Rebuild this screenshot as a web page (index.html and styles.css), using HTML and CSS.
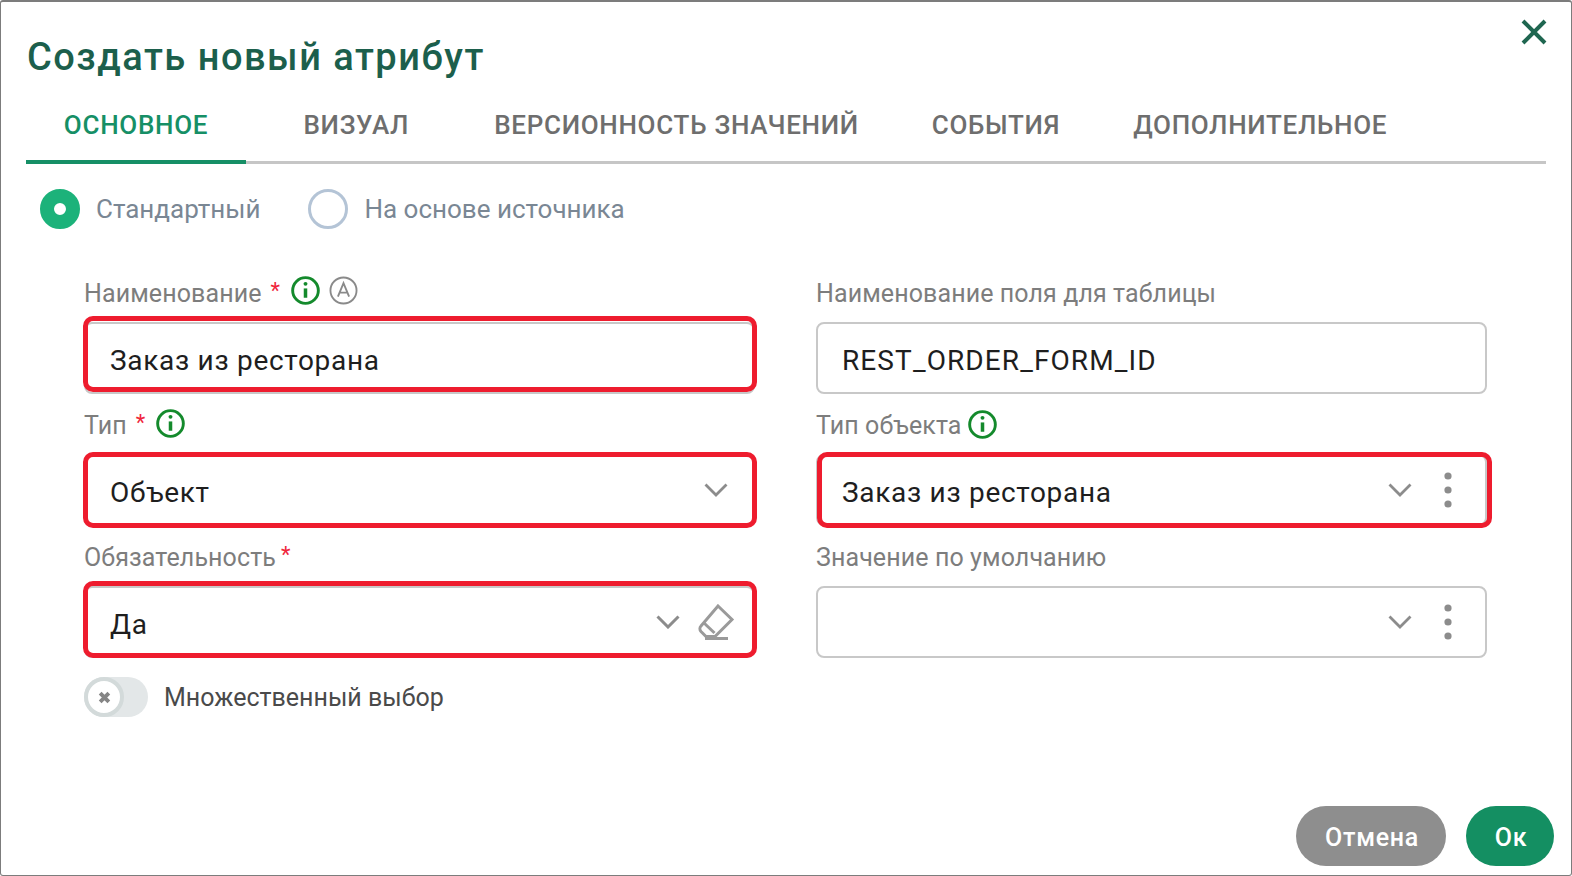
FILE: index.html
```html
<!DOCTYPE html>
<html lang="ru">
<head>
<meta charset="utf-8">
<title>Создать новый атрибут</title>
<link rel="stylesheet" href="styles.css">
</head>
<body>
<div class="dialog">
  <header class="head">
    <h1 class="title">Создать новый атрибут</h1>
    <button class="close" type="button" aria-label="Закрыть">
      <svg viewBox="0 0 26 26" width="26" height="26"><path d="M2 2 24 24M24 2 2 24" fill="none" stroke="#1f6650" stroke-width="4"/></svg>
    </button>
  </header>
  <nav class="tabs">
    <a class="tab tab-active">ОСНОВНОЕ</a>
    <a class="tab tab-visual">ВИЗУАЛ</a>
    <a class="tab">ВЕРСИОННОСТЬ ЗНАЧЕНИЙ</a>
    <a class="tab">СОБЫТИЯ</a>
    <a class="tab">ДОПОЛНИТЕЛЬНОЕ</a>
  </nav>
  <div class="radios">
    <label class="radio"><span class="dot dot-on"></span>Стандартный</label>
    <label class="radio"><span class="dot"></span>На основе источника</label>
  </div>
  <div class="form">
    <div class="cell">
      <div class="label">Наименование <span class="req">*</span>
        <svg class="ico ico-top" viewBox="0 0 28 28"><circle cx="14" cy="14" r="12.4" fill="none" stroke="#148a2c" stroke-width="2.8"/><path d="M14 12v9" stroke="#148a2c" stroke-width="3.4"/><circle cx="14" cy="7.6" r="1.9" fill="#148a2c"/></svg>
        <svg class="ico ico-top ico-a" viewBox="0 0 28 28"><circle cx="14" cy="14" r="12.6" fill="none" stroke="#8a8a8a" stroke-width="1.8"/><path d="M8.6 20 14 7l5.4 13M10.4 16h7.2" fill="none" stroke="#8a8a8a" stroke-width="1.8"/></svg>
      </div>
      <div class="field"><span class="value">Заказ из ресторана</span><span class="mark mark-first"></span></div>
    </div>
    <div class="cell">
      <div class="label">Наименование поля для таблицы</div>
      <div class="field"><span class="value value-code">REST_ORDER_FORM_ID</span></div>
    </div>
    <div class="cell">
      <div class="label">Тип <span class="req">*</span>
        <svg class="ico" viewBox="0 0 28 28"><circle cx="14" cy="14" r="12.4" fill="none" stroke="#148a2c" stroke-width="2.8"/><path d="M14 12v9" stroke="#148a2c" stroke-width="3.4"/><circle cx="14" cy="7.6" r="1.9" fill="#148a2c"/></svg>
      </div>
      <div class="field"><span class="value">Объект</span>
        <svg class="chev chev-solo" viewBox="0 0 24 14"><path d="M1.5 1.5 12 12 22.500 1.500" fill="none" stroke="#8c8c8c" stroke-width="2.800"/></svg>
        <span class="mark"></span></div>
    </div>
    <div class="cell">
      <div class="label">Тип объекта
        <svg class="ico ico-plain" viewBox="0 0 28 28"><circle cx="14" cy="14" r="12.4" fill="none" stroke="#148a2c" stroke-width="2.8"/><path d="M14 12v9" stroke="#148a2c" stroke-width="3.4"/><circle cx="14" cy="7.6" r="1.9" fill="#148a2c"/></svg>
      </div>
      <div class="field"><span class="value">Заказ из ресторана</span>
        <svg class="chev" viewBox="0 0 24 14"><path d="M1.5 1.5 12 12 22.500 1.500" fill="none" stroke="#8c8c8c" stroke-width="2.800"/></svg>
        <svg class="kebab" viewBox="0 0 8 36"><circle cx="4" cy="4" r="3.600" fill="#8c8c8c"/><circle cx="4" cy="18" r="3.600" fill="#8c8c8c"/><circle cx="4" cy="32" r="3.600" fill="#8c8c8c"/></svg>
        <span class="mark mark-right"></span></div>
    </div>
    <div class="cell">
      <div class="label">Обязательность<span class="req req-tight">*</span></div>
      <div class="field"><span class="value">Да</span>
        <svg class="chev chev-small" viewBox="0 0 24 14"><path d="M1.5 1.5 12 12 22.500 1.500" fill="none" stroke="#8c8c8c" stroke-width="3"/></svg>
        <svg class="eraser" viewBox="0 0 38 36"><path d="M21 2 35 15.500 18 32.500H9L4 27.500a4 4 0 0 1 0-5.500Z" fill="none" stroke="#9a9a9a" stroke-width="3"/><path d="M6.500 18.500 17.500 29" fill="none" stroke="#9a9a9a" stroke-width="3"/><path d="M8 34.500H31" stroke="#9a9a9a" stroke-width="3"/></svg>
        <span class="mark mark-tall"></span></div>
    </div>
    <div class="cell">
      <div class="label">Значение по умолчанию</div>
      <div class="field">
        <svg class="chev" viewBox="0 0 24 14"><path d="M1.5 1.5 12 12 22.500 1.500" fill="none" stroke="#8c8c8c" stroke-width="2.800"/></svg>
        <svg class="kebab" viewBox="0 0 8 36"><circle cx="4" cy="4" r="3.600" fill="#8c8c8c"/><circle cx="4" cy="18" r="3.600" fill="#8c8c8c"/><circle cx="4" cy="32" r="3.600" fill="#8c8c8c"/></svg>
      </div>
    </div>
  </div>
  <div class="toggle-row">
    <span class="track"><span class="knob"><svg viewBox="0 0 12 12" width="13" height="13"><path d="M2 2 10 10M10 2 2 10" stroke="#858585" stroke-width="3.600"/></svg></span></span>
    <span class="toggle-text">Множественный выбор</span>
  </div>
  <footer class="foot">
    <button class="btn btn-cancel" type="button">Отмена</button>
    <button class="btn btn-ok" type="button">Ок</button>
  </footer>
</div>
</body>
</html>
```

FILE: styles.css
```css
* { box-sizing: border-box; }
html, body { margin: 0; height: 100%; background: #fff; }
body { font-family: Roboto, "Noto Sans", sans-serif; overflow: hidden; }
.dialog {
  height: 876px;
  border: 1px solid #7c7c7c;
  border-top-width: 2px;
  border-radius: 3px;
  background: #fff;
  padding: 0 17px 9px 25px;
  display: flex;
  flex-direction: column;
}
.head { position: relative; height: 84px; }
.title {
  margin: 0;
  padding: 30px 0 0 1px;
  font-size: 38px;
  line-height: 50px;
  font-weight: 500;
  color: #1c5f4c;
  letter-spacing: 1.5px;
}
.close {
  position: absolute;
  right: 7px;
  top: 17px;
  width: 26px;
  height: 26px;
  padding: 0;
  border: 0;
  background: none;
}
.tabs {
  display: flex;
  width: 1520px;
  height: 78px;
  border-bottom: 3px solid #c6c6c6;
}
.tab {
  height: 78px;
  padding: 0 36.5px;
  font-size: 26px;
  line-height: 78px;
  font-weight: 500;
  color: #6e6e6e;
  letter-spacing: 0.7px;
  white-space: nowrap;
}
.tab-active {
  padding: 0;
  width: 220px;
  text-align: center;
  color: #168f66;
  border-bottom: 4px solid #168f66;
}
.tab-visual { margin: 0 12px 0 21px; }
.radios { display: flex; gap: 48px; padding: 24px 0 0 14px; }
.radio {
  display: flex;
  align-items: center;
  gap: 16px;
  height: 42px;
  font-size: 26px;
  color: #7a8794;
}
.dot {
  width: 40px;
  height: 40px;
  border-radius: 50%;
  border: 3px solid #b4c4d6;
  background: #fff;
}
.dot-on { border: 14px solid #1cb27a; }
.form {
  display: grid;
  grid-template-columns: 671px 671px;
  column-gap: 61px;
  margin: 44px 0 0 58px;
}
.cell { height: 132px; }
.label {
  display: flex;
  align-items: center;
  gap: 6px;
  height: 38px;
  margin-bottom: 10px;
  font-size: 25px;
  letter-spacing: 0.1px;
  color: #7d7d7d;
  white-space: nowrap;
}
.req { color: #f0263c; font-size: 22px; margin: -6px 0 0 3px; }
.req-tight { margin-left: -1px; }
.ico { width: 29px; height: 29px; margin-left: 5px; margin-top: -4px; }
.ico-top { margin-top: -6px; }
.ico-a { margin-left: 3px; }
.ico-plain { margin-left: 0; margin-top: -2px; }
.field {
  position: relative;
  height: 72px;
  display: flex;
  align-items: center;
  padding: 0 24px;
  border: 2px solid #c8c8c8;
  border-radius: 8px;
  background: #fff;
}
.value {
  flex: 1;
  padding-top: 5px;
  font-size: 28px;
  color: #1e1e1e;
  letter-spacing: 0.7px;
  white-space: nowrap;
}
.value-code { letter-spacing: 1.1px; }
.chev { width: 24px; height: 14px; margin-left: auto; margin-right: 32px; flex: none; }
.chev-solo { margin-right: 1px; }
.chev-small { margin-right: 17px; }
.kebab { width: 8px; height: 36px; flex: none; margin-right: 9px; }
.eraser { width: 38px; height: 36px; flex: none; margin: 0 -6px 0 0; }
.mark {
  position: absolute;
  inset: -4px -4px -4px -3px;
  border: 5px solid #ee1c2e;
  border-radius: 10px;
  pointer-events: none;
}
.mark-first { inset: -8px -4px 0 -3px; }
.mark-right { left: -1px; right: -7px; }
.mark-tall { top: -7px; bottom: -2px; }
.toggle-row { display: flex; align-items: center; gap: 16px; margin: 6px 0 0 58px; height: 42px; }
.track {
  width: 64px;
  height: 40px;
  border-radius: 20px;
  background: #e3e7e8;
  display: flex;
}
.knob {
  width: 40px;
  height: 40px;
  border-radius: 50%;
  background: #fff;
  border: 4px solid #d3dada;
  display: flex;
  align-items: center;
  justify-content: center;
}
.toggle-text { font-size: 25px; color: #4a4a4a; }
.foot { margin-top: auto; display: flex; justify-content: flex-end; gap: 20px; }
.btn {
  height: 60px;
  border: 0;
  border-radius: 30px;
  font-family: inherit;
  font-size: 25px;
  font-weight: 500;
  letter-spacing: 0.7px;
  color: #fff;
  padding: 2px 0 0 2px;
}
.btn-cancel { width: 150px; background: #8e8e8e; }
.btn-ok { width: 88px; background: #148f62; }
```
